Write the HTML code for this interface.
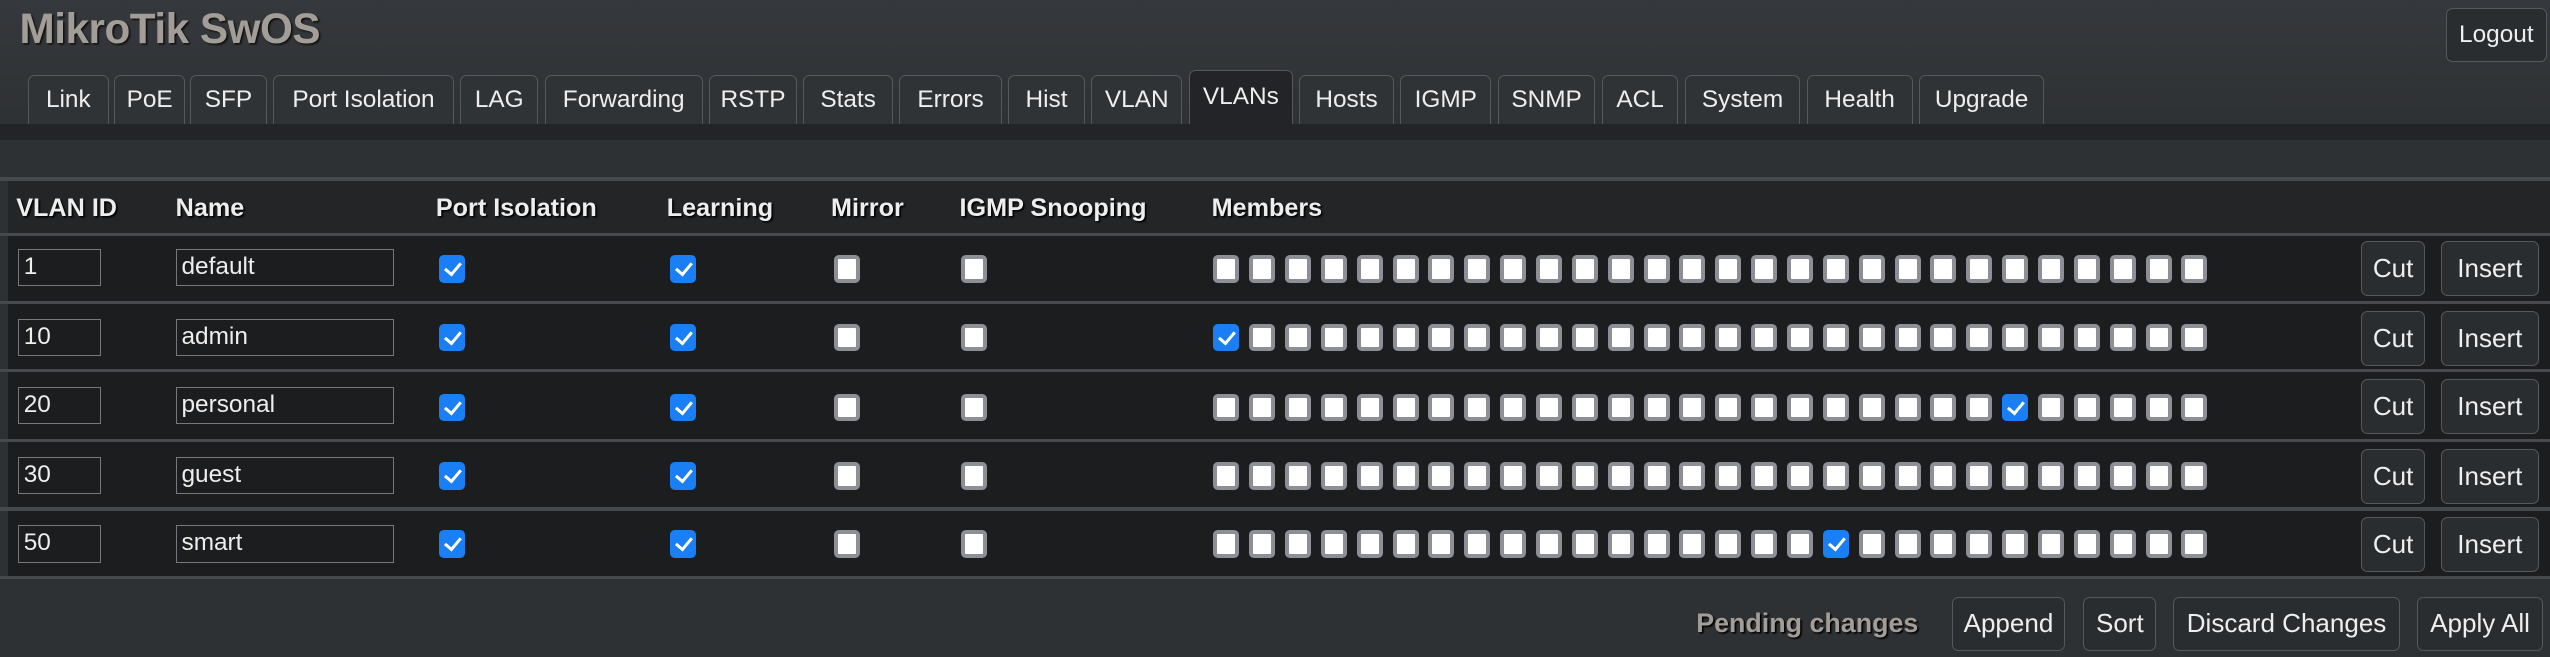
<!DOCTYPE html>
<html><head><meta charset="utf-8"><style>
html,body{margin:0;padding:0;background:#2f3236;overflow:hidden;}
#w{position:relative;width:1568px;height:404px;zoom:1.62628;font-family:"Liberation Sans",sans-serif;color:#ececec;font-size:15px;background:linear-gradient(#35383c,#2e3134 80px);}
.a{position:absolute;}
.title{left:12px;top:3px;font-size:26px;font-weight:bold;color:#a39d97;text-shadow:1px 1px 1px #111;letter-spacing:-0.3px;}
.btn{position:absolute;border:1px solid #55595d;border-radius:4px;background:#2a2d30;color:#eee;font-size:16px;display:flex;align-items:center;justify-content:center;box-sizing:border-box;}
.tab{position:absolute;top:46px;height:30px;border:1px solid #55595d;border-bottom:none;border-radius:4px 4px 0 0;background:#303336;box-sizing:border-box;display:flex;align-items:center;justify-content:center;font-size:15px;color:#eee;}
.tab.on{top:43px;height:33px;background:#222427;}
.band{left:0;top:76px;width:1568px;height:10px;background:#222427;}
.line{left:0;width:1568px;height:2px;background:#464a4e;}
.tbl{left:5px;top:111px;width:1563px;height:245px;background:#1c1d1f;}
.hdr{left:5px;top:111px;width:1563px;height:33px;background:#232527;}
.h{top:119px;font-weight:bold;font-size:15.5px;color:#eee;text-shadow:1px 1px 1px #000;}
.inp{position:absolute;height:23px;border:1px solid #75787c;box-sizing:border-box;background:#1c1d1f;color:#eee;font-size:15px;padding-left:3px;line-height:21px;}
.cb{position:absolute;width:16px;height:17px;box-sizing:border-box;border:2.5px solid #8e8e96;border-radius:3px;background:#fff;}
.cb.c{background:#1a7ef5;border-color:#1a7ef5;}
.cb.c::after{content:"";position:absolute;left:3px;top:0px;width:4px;height:8px;border:solid #fff;border-width:0 2px 2px 0;transform:rotate(40deg);}
.pend{left:1043px;top:374px;font-weight:bold;color:#a39d97;text-shadow:1px 1px 1px #000;font-size:16.5px;}
</style></head><body><div id="w">
<div class="a title">MikroTik SwOS</div>
<div class="btn" style="left:1504px;top:5px;width:62px;height:33px;font-size:15px">Logout</div>

<div class="tab" style="left:17px;width:50px">Link</div>
<div class="tab" style="left:70px;width:44px">PoE</div>
<div class="tab" style="left:117px;width:47px">SFP</div>
<div class="tab" style="left:168px;width:111px">Port Isolation</div>
<div class="tab" style="left:283px;width:48px">LAG</div>
<div class="tab" style="left:335px;width:97px">Forwarding</div>
<div class="tab" style="left:436px;width:54px">RSTP</div>
<div class="tab" style="left:494px;width:55px">Stats</div>
<div class="tab" style="left:553px;width:63px">Errors</div>
<div class="tab" style="left:620px;width:47px">Hist</div>
<div class="tab" style="left:671px;width:56px">VLAN</div>
<div class="tab on" style="left:731px;width:64px">VLANs</div>
<div class="tab" style="left:799px;width:58px">Hosts</div>
<div class="tab" style="left:861px;width:56px">IGMP</div>
<div class="tab" style="left:921px;width:60px">SNMP</div>
<div class="tab" style="left:985px;width:47px">ACL</div>
<div class="tab" style="left:1036px;width:71px">System</div>
<div class="tab" style="left:1111px;width:65px">Health</div>
<div class="tab" style="left:1180px;width:77px">Upgrade</div>

<div class="a band"></div>
<div class="a tbl"></div>
<div class="a hdr"></div>
<div class="a line" style="top:109px"></div>
<div class="a line" style="top:143px"></div>
<div class="a line" style="top:185px"></div>
<div class="a line" style="top:227px"></div>
<div class="a line" style="top:270px"></div>
<div class="a line" style="top:312px"></div>
<div class="a line" style="top:354px"></div>

<div class="a h" style="left:10px">VLAN ID</div>
<div class="a h" style="left:108px">Name</div>
<div class="a h" style="left:268px">Port Isolation</div>
<div class="a h" style="left:410px">Learning</div>
<div class="a h" style="left:511px">Mirror</div>
<div class="a h" style="left:590px">IGMP Snooping</div>
<div class="a h" style="left:745px">Members</div>

<div id="rows">
<div class="inp" style="left:11px;top:153px;width:51px">1</div><div class="inp" style="left:108px;top:153px;width:134px">default</div>
<div class="inp" style="left:11px;top:196px;width:51px">10</div><div class="inp" style="left:108px;top:196px;width:134px">admin</div>
<div class="inp" style="left:11px;top:238px;width:51px">20</div><div class="inp" style="left:108px;top:238px;width:134px">personal</div>
<div class="inp" style="left:11px;top:281px;width:51px">30</div><div class="inp" style="left:108px;top:281px;width:134px">guest</div>
<div class="inp" style="left:11px;top:323px;width:51px">50</div><div class="inp" style="left:108px;top:323px;width:134px">smart</div>

<div class="btn" style="left:1452px;top:148px;width:39px;height:34px">Cut</div><div class="btn" style="left:1501px;top:148px;width:60px;height:34px">Insert</div>
<div class="btn" style="left:1452px;top:191px;width:39px;height:34px">Cut</div><div class="btn" style="left:1501px;top:191px;width:60px;height:34px">Insert</div>
<div class="btn" style="left:1452px;top:233px;width:39px;height:34px">Cut</div><div class="btn" style="left:1501px;top:233px;width:60px;height:34px">Insert</div>
<div class="btn" style="left:1452px;top:276px;width:39px;height:34px">Cut</div><div class="btn" style="left:1501px;top:276px;width:60px;height:34px">Insert</div>
<div class="btn" style="left:1452px;top:318px;width:39px;height:34px">Cut</div><div class="btn" style="left:1501px;top:318px;width:60px;height:34px">Insert</div>
</div>

<div class="a pend">Pending changes</div>
<div class="btn" style="left:1200px;top:367px;width:70px;height:33px">Append</div>
<div class="btn" style="left:1281px;top:367px;width:45px;height:33px">Sort</div>
<div class="btn" style="left:1336px;top:367px;width:140px;height:33px">Discard Changes</div>
<div class="btn" style="left:1486px;top:367px;width:78px;height:33px">Apply All</div>
</div>
<script>
var tops=[157,199,242,284,326],checked=[-1,0,22,-1,17];
var h='';
for(var r=0;r<5;r++){
 var t=tops[r];
 h+='<div class="cb c" style="left:270px;top:'+t+'px"></div>';
 h+='<div class="cb c" style="left:412px;top:'+t+'px"></div>';
 h+='<div class="cb" style="left:513px;top:'+t+'px"></div>';
 h+='<div class="cb" style="left:591px;top:'+t+'px"></div>';
 for(var i=0;i<28;i++){
  h+='<div class="cb'+(i==checked[r]?' c':'')+'" style="left:'+(746+i*22.05)+'px;top:'+t+'px"></div>';
 }
}
document.getElementById('rows').insertAdjacentHTML('beforeend',h);
</script>
</body></html>
